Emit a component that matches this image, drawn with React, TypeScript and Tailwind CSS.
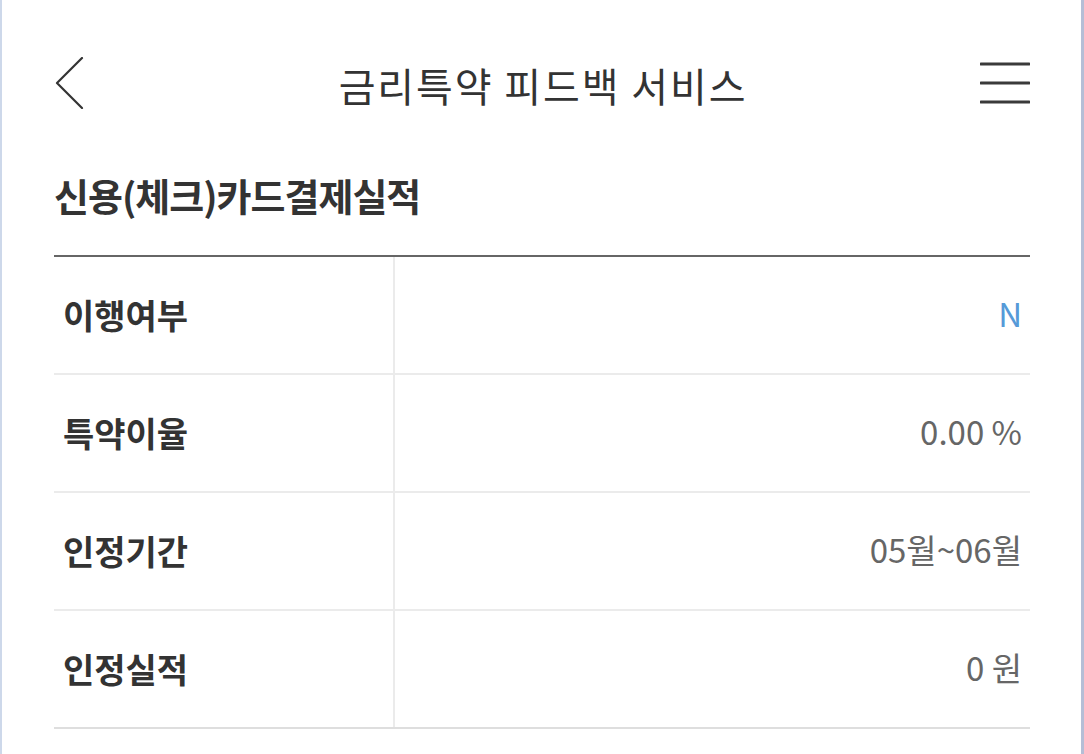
const ROWS: { label: string; value: string; accent?: boolean }[] = [
  { label: "이행여부", value: "N", accent: true },
  { label: "특약이율", value: "0.00 %" },
  { label: "인정기간", value: "05월~06월" },
  { label: "인정실적", value: "0 원" },
];

export default function App() {
  return (
    <div
      className="relative h-[754px] w-[1084px] overflow-hidden border-l-2 border-r-[3px] border-l-[#cdd8ea] border-r-[#b5bed6] bg-white text-[#333]"
      style={{ fontFamily: '"Noto Sans CJK KR", "Noto Sans", sans-serif' }}
    >
      <div className="px-[52px] pr-[51px]">
        {/* Header */}
        <div className="relative flex h-[166px] items-center justify-between">
          <button className="flex h-[52px] w-[30px] items-center">
            <svg width="30" height="52" viewBox="0 0 30 52" fill="none">
              <path d="M28 1 L3 26 L28 51" stroke="#333" strokeWidth="2.2" strokeLinecap="round" strokeLinejoin="round" />
            </svg>
          </button>
          <h1 className="absolute left-1/2 top-1/2 -translate-x-1/2 -translate-y-1/2 pt-[4px] pl-[2px] text-[40px] leading-[46px] font-normal tracking-[1.9px] whitespace-nowrap text-[#333]">
            금리특약 피드백 서비스
          </h1>
          <button className="flex h-[44px] w-[50px] items-center">
            <svg width="50" height="44" viewBox="0 0 50 44" fill="none">
              <path d="M1 3 H49 M1 22 H49 M1 41 H49" stroke="#3a3a3a" strokeWidth="3" strokeLinecap="round" />
            </svg>
          </button>
        </div>

        {/* Section title */}
        <h2 className="mt-[7px] mb-[38px] text-[38px] leading-[44px] font-bold tracking-[-1px] text-[#333]">
          신용(체크)카드결제실적
        </h2>

        {/* Table */}
        <div className="border-t-2 border-[#666]">
          {ROWS.map((row, i) => (
            <div
              key={row.label}
              className={`grid h-[118px] grid-cols-[341px_1fr] border-b-2 ${
                i === ROWS.length - 1 ? "border-[#dedede]" : "border-[#ebebeb]"
              }`}
            >
              <div className="flex items-center border-r-2 border-[#ebebeb] pl-[9px] pb-[2px] text-[34px] font-bold text-[#333]">
                {row.label}
              </div>
              <div
                className={`flex items-center justify-end pr-[8px] pb-[2px] text-[33px] ${
                  row.accent ? "text-[#569ad8]" : "text-[#666]"
                }`}
              >
                {row.value}
              </div>
            </div>
          ))}
        </div>
      </div>
    </div>
  );
}
